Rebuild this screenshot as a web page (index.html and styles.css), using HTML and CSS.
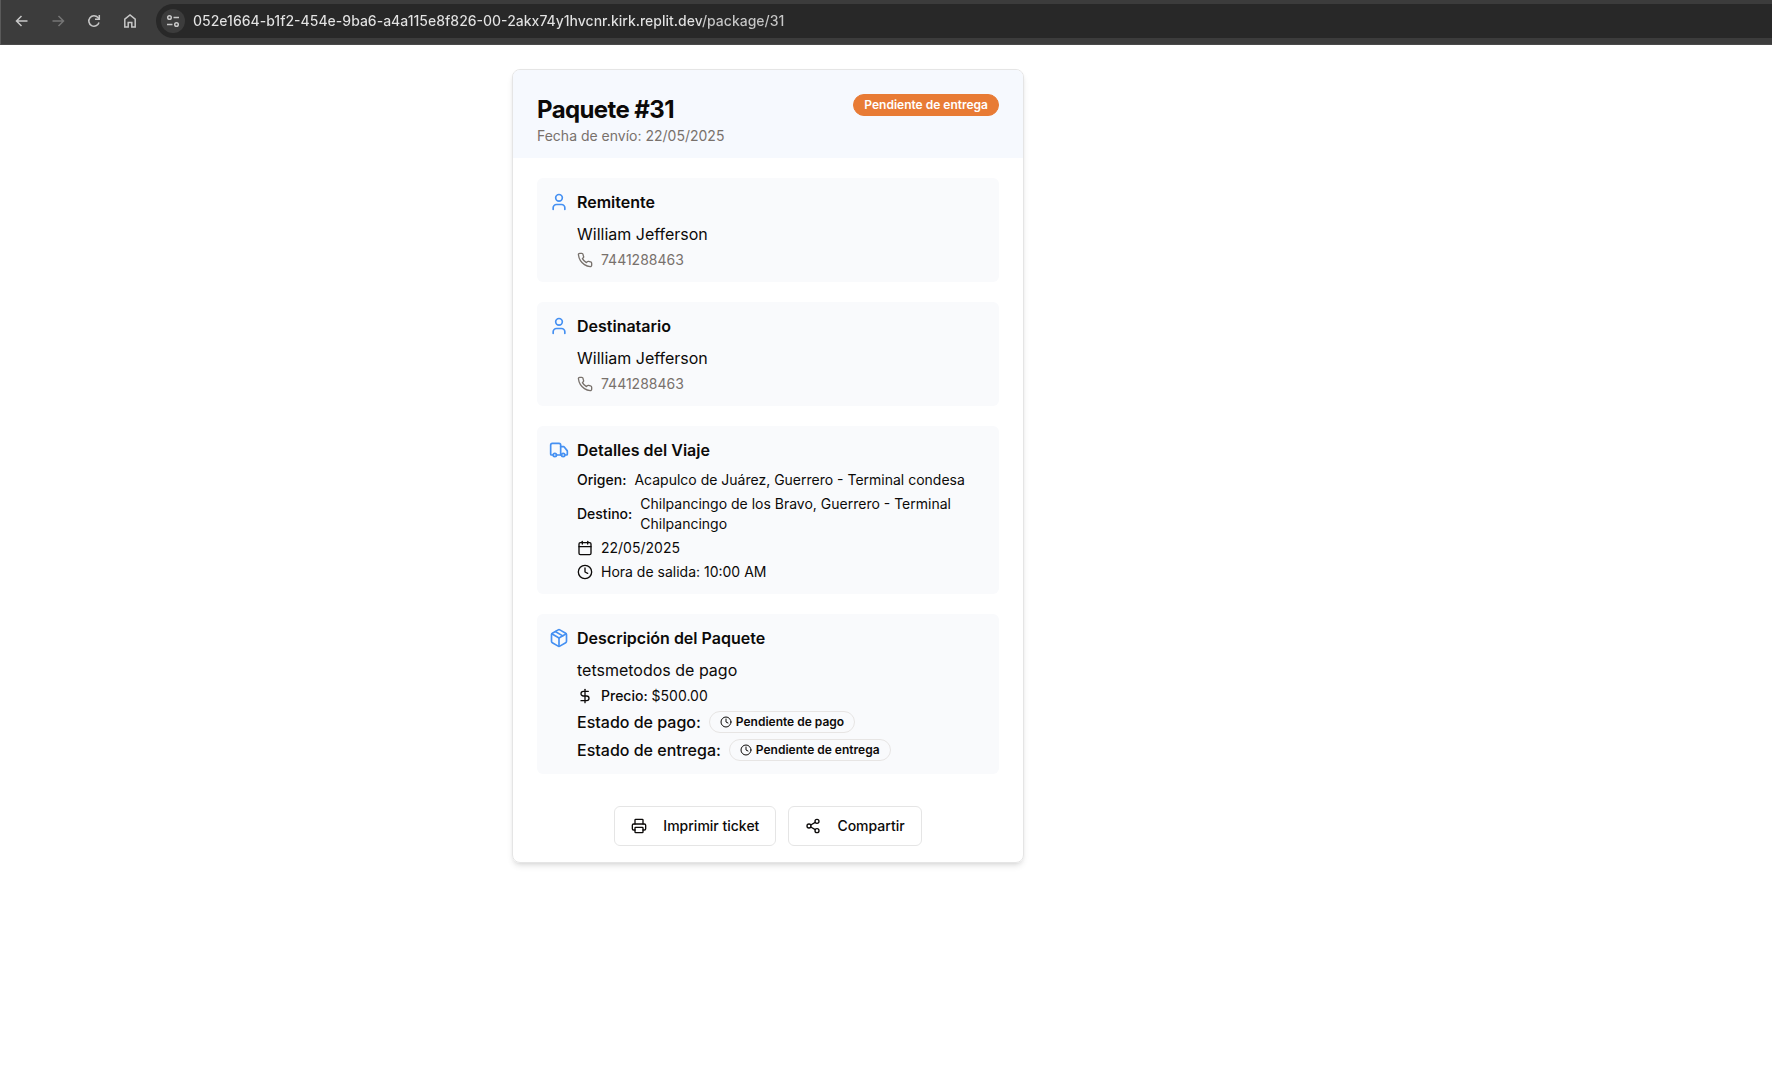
FILE: index.html
```html
<!DOCTYPE html>
<html lang="es">
<head>
<meta charset="utf-8">
<meta name="viewport" content="width=device-width, initial-scale=1">
<title>Paquete #31</title>
<link rel="stylesheet" href="styles.css">
</head>
<body>
<svg class="sprite" aria-hidden="true">
  <symbol id="user" viewBox="0 0 24 24"><path d="M19 21v-2a4 4 0 0 0-4-4H9a4 4 0 0 0-4 4v2"/><circle cx="12" cy="7" r="4"/></symbol>
  <symbol id="phone" viewBox="0 0 24 24"><path d="M22 16.92v3a2 2 0 0 1-2.18 2 19.79 19.79 0 0 1-8.63-3.07 19.5 19.5 0 0 1-6-6 19.79 19.79 0 0 1-3.07-8.67A2 2 0 0 1 4.11 2h3a2 2 0 0 1 2 1.72 12.84 12.84 0 0 0 .7 2.81 2 2 0 0 1-.45 2.11L8.09 9.91a16 16 0 0 0 6 6l1.27-1.27a2 2 0 0 1 2.11-.45 12.84 12.84 0 0 0 2.81.7A2 2 0 0 1 22 16.92z"/></symbol>
  <symbol id="truck" viewBox="0 0 24 24"><path d="M14 18V6a2 2 0 0 0-2-2H4a2 2 0 0 0-2 2v11a1 1 0 0 0 1 1h2"/><path d="M15 18H9"/><path d="M19 18h2a1 1 0 0 0 1-1v-3.65a1 1 0 0 0-.22-.624l-3.48-4.35A1 1 0 0 0 17.52 8H14"/><circle cx="17" cy="18" r="2"/><circle cx="7" cy="18" r="2"/></symbol>
  <symbol id="calendar" viewBox="0 0 24 24"><path d="M8 2v4"/><path d="M16 2v4"/><rect width="18" height="18" x="3" y="4" rx="2"/><path d="M3 10h18"/></symbol>
  <symbol id="clock" viewBox="0 0 24 24"><circle cx="12" cy="12" r="10"/><path d="M12 6v6l4 2"/></symbol>
  <symbol id="package" viewBox="0 0 24 24"><path d="m7.5 4.27 9 5.15"/><path d="M21 8a2 2 0 0 0-1-1.73l-7-4a2 2 0 0 0-2 0l-7 4A2 2 0 0 0 3 8v8a2 2 0 0 0 1 1.73l7 4a2 2 0 0 0 2 0l7-4A2 2 0 0 0 21 16Z"/><path d="m3.3 7 8.7 5 8.7-5"/><path d="M12 22V12"/></symbol>
  <symbol id="dollar" viewBox="0 0 24 24"><path d="M12 2v20"/><path d="M17 5H9.5a3.5 3.5 0 0 0 0 7h5a3.5 3.5 0 0 1 0 7H6"/></symbol>
  <symbol id="printer" viewBox="0 0 24 24"><path d="M6 18H4a2 2 0 0 1-2-2v-5a2 2 0 0 1 2-2h16a2 2 0 0 1 2 2v5a2 2 0 0 1-2 2h-2"/><path d="M6 9V3a1 1 0 0 1 1-1h10a1 1 0 0 1 1 1v6"/><rect x="6" y="14" width="12" height="8" rx="1"/></symbol>
  <symbol id="share" viewBox="0 0 24 24"><circle cx="18" cy="5" r="3"/><circle cx="6" cy="12" r="3"/><circle cx="18" cy="19" r="3"/><path d="m8.59 13.51 6.83 3.98"/><path d="m15.41 6.51-6.82 3.98"/></symbol>
</svg>

<header class="toolbar">
  <nav class="toolbar-nav" aria-label="Navegador">
    <button class="nav-button" type="button" aria-label="Atrás"><svg viewBox="0 0 16 16"><path d="M13.5 8H3M7.5 3 2.5 8l5 5"/></svg></button>
    <button class="nav-button nav-button-off" type="button" aria-label="Adelante"><svg viewBox="0 0 16 16"><path d="M2.5 8H13M8.5 3l5 5-5 5"/></svg></button>
    <button class="nav-button" type="button" aria-label="Recargar"><svg viewBox="0 0 16 16"><path d="M13 9.5A5.2 5.2 0 1 1 12 4.6L13.300 6"/><path d="M13.300 2v4.200H9"/></svg></button>
    <button class="nav-button" type="button" aria-label="Inicio"><svg viewBox="0 0 16 16"><path d="M2.800 6.200 8 2l5.200 4.200V14H9.800V9.500H6.200V14H2.800Z"/></svg></button>
  </nav>
  <div class="address">
    <button class="site-info" type="button" aria-label="Información del sitio"><svg viewBox="0 0 16 16"><circle cx="4.500" cy="4.500" r="1.800"/><path d="M8.500 4.500H14M2 11.500h5.500"/><circle cx="11.500" cy="11.500" r="1.800"/></svg></button>
    <input class="address-input" type="text" aria-label="Dirección" value="052e1664-b1f2-454e-9ba6-a4a115e8f826-00-2akx74y1hvcnr.kirk.replit.dev/package/31">
  </div>
</header>

<main class="page">
  <article class="card">
    <header class="card-header">
      <div>
        <h1 class="card-title">Paquete #31</h1>
        <p class="card-date">Fecha de envío: 22/05/2025</p>
      </div>
      <span class="badge badge-solid">Pendiente de entrega</span>
    </header>

    <div class="card-body">
      <section class="panel">
        <svg class="icon icon-panel"><use href="#user"/></svg>
        <div class="panel-content">
          <h2 class="panel-title">Remitente</h2>
          <p>William Jefferson</p>
          <p class="row row-muted"><svg class="icon"><use href="#phone"/></svg>7441288463</p>
        </div>
      </section>

      <section class="panel">
        <svg class="icon icon-panel"><use href="#user"/></svg>
        <div class="panel-content">
          <h2 class="panel-title">Destinatario</h2>
          <p>William Jefferson</p>
          <p class="row row-muted"><svg class="icon"><use href="#phone"/></svg>7441288463</p>
        </div>
      </section>

      <section class="panel">
        <svg class="icon icon-panel"><use href="#truck"/></svg>
        <div class="panel-content">
          <h2 class="panel-title">Detalles del Viaje</h2>
          <p class="row"><span class="label">Origen:</span><span>Acapulco de Juárez, Guerrero - Terminal condesa</span></p>
          <p class="row"><span class="label">Destino:</span><span>Chilpancingo de los Bravo, Guerrero - Terminal Chilpancingo</span></p>
          <p class="row"><svg class="icon"><use href="#calendar"/></svg>22/05/2025</p>
          <p class="row"><svg class="icon"><use href="#clock"/></svg>Hora de salida: 10:00 AM</p>
        </div>
      </section>

      <section class="panel">
        <svg class="icon icon-panel"><use href="#package"/></svg>
        <div class="panel-content">
          <h2 class="panel-title">Descripción del Paquete</h2>
          <p>tetsmetodos de pago</p>
          <p class="row"><svg class="icon"><use href="#dollar"/></svg><span><span class="label">Precio:</span> $500.00</span></p>
          <p class="status"><span class="label">Estado de pago:</span><span class="badge"><svg class="icon icon-small"><use href="#clock"/></svg>Pendiente de pago</span></p>
          <p class="status"><span class="label">Estado de entrega:</span><span class="badge"><svg class="icon icon-small"><use href="#clock"/></svg>Pendiente de entrega</span></p>
        </div>
      </section>
    </div>

    <footer class="card-footer">
      <button class="button" type="button"><svg class="icon"><use href="#printer"/></svg>Imprimir ticket</button>
      <button class="button" type="button"><svg class="icon"><use href="#share"/></svg>Compartir</button>
    </footer>
  </article>
</main>
</body>
</html>
```
FILE: styles.css
```css
* { box-sizing: border-box; }

body {
  margin: 0;
  background: #fff;
  color: #0c0a09;
  font: 400 16px/24px Inter, "Liberation Sans", sans-serif;
}

h1, h2, p { margin: 0; }
button, input { font: inherit; }
.sprite { display: none; }

/* Browser toolbar */
.toolbar {
  display: flex;
  align-items: center;
  gap: 14px;
  height: 45px;
  padding: 0 0 3px 9px;
  background: #3c3c3c;
  border-left: 1px solid #5a5a5a;
  border-bottom: 1px solid #4a4a4a;
}
.toolbar-nav { display: flex; gap: 12px; }
.nav-button, .site-info {
  display: grid;
  place-items: center;
  flex: none;
  width: 24px;
  height: 24px;
  padding: 0;
  border: 0;
  border-radius: 50%;
  background: none;
  color: #c7c7c7;
}
.nav-button svg, .site-info svg {
  width: 16px;
  height: 16px;
  fill: none;
  stroke: currentColor;
  stroke-width: 1.5;
}
.nav-button-off { color: #757575; }
.address {
  display: flex;
  flex: 1;
  align-items: center;
  gap: 8px;
  height: 34px;
  padding-left: 5px;
  border-radius: 17px 0 0 17px;
  background: #282828;
}
.site-info { background: #3c3c3c; }
.address-input {
  flex: 1;
  min-width: 0;
  padding: 0;
  border: 0;
  outline: 0;
  /* The host is brighter than the path that follows it */
  background: linear-gradient(to right, #e3e3e3 508px, #c7c7c7 508px);
  -webkit-background-clip: text;
  background-clip: text;
  color: #e3e3e3;
  -webkit-text-fill-color: transparent;
  font-size: 14px;
  font-weight: 500;
  line-height: 20px;
}

/* Package card */
.page {
  max-width: 1536px;
  padding: 24px 16px;
}
.card {
  max-width: 512px;
  margin: 0 auto;
  overflow: hidden;
  border: 1px solid #e5e5e5;
  border-radius: 8px;
  box-shadow: 0 4px 6px -1px rgba(0, 0, 0, .1), 0 2px 4px -2px rgba(0, 0, 0, .1);
}
.card-header {
  display: flex;
  align-items: flex-start;
  justify-content: space-between;
  padding: 24px 24px 12px;
  background: #f6f9fe;
}
.card-title {
  font-size: 24px;
  font-weight: 700;
  line-height: 32px;
  letter-spacing: -0.025em;
}
.card-date { color: #78716c; font-size: 14px; line-height: 20px; }
.card-body {
  display: flex;
  flex-direction: column;
  gap: 20px;
  padding: 20px 24px 0;
}
.panel {
  display: flex;
  gap: 8px;
  padding: 12px;
  border-radius: 6px;
  background: #f9fafc;
}
.panel-content {
  display: flex;
  flex: 1;
  flex-direction: column;
  gap: 4px;
}
.panel-title {
  margin-bottom: 4px;
  font-size: 16px;
  font-weight: 600;
  line-height: 24px;
}
.row {
  display: flex;
  align-items: center;
  gap: 8px;
  font-size: 14px;
  line-height: 20px;
}
.row-muted { color: #78716c; }
.status { display: flex; align-items: center; gap: 8px; }
.label { font-weight: 500; }

.badge {
  display: inline-flex;
  align-items: center;
  gap: 4px;
  padding: 2px 10px;
  border: 1px solid #e7e5e4;
  border-radius: 11px;
  font-size: 12px;
  font-weight: 600;
  line-height: 16px;
}
.badge-solid {
  border-color: #e87b35;
  background: #e87b35;
  color: #fff;
}

.icon {
  flex: none;
  width: 16px;
  height: 16px;
  fill: none;
  stroke: currentColor;
  stroke-width: 2;
  stroke-linecap: round;
  stroke-linejoin: round;
}
.icon-panel { width: 20px; height: 20px; margin-top: 2px; color: #4590f2; }
.icon-small { width: 12px; height: 12px; }

.card-footer {
  display: flex;
  justify-content: center;
  gap: 12px;
  padding: 32px 24px 16px;
}
.button {
  display: inline-flex;
  align-items: center;
  gap: 16px;
  height: 40px;
  padding: 0 16px;
  border: 1px solid #e5e5e5;
  border-radius: 6px;
  background: #fff;
  color: inherit;
  font-size: 14px;
  font-weight: 500;
  line-height: 20px;
}
```
